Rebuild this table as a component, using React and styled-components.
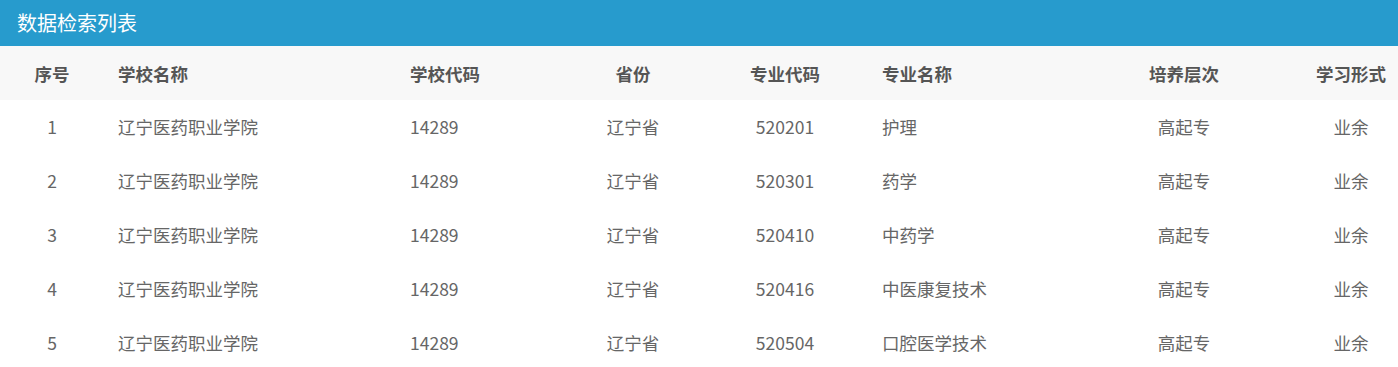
import React from 'react';
import styled, { createGlobalStyle } from 'styled-components';

const GlobalStyle = createGlobalStyle`
  body {
    margin: 0;
    background: #fff;
    font-family: "Noto Sans CJK SC", "Noto Sans", sans-serif;
  }
`;

const columns = [
  { key: 'no', title: '序号', align: 'center' },
  { key: 'school', title: '学校名称', align: 'left' },
  { key: 'code', title: '学校代码', align: 'left' },
  { key: 'province', title: '省份', align: 'center' },
  { key: 'majorCode', title: '专业代码', align: 'center' },
  { key: 'major', title: '专业名称', align: 'left' },
  { key: 'level', title: '培养层次', align: 'center' },
  { key: 'form', title: '学习形式', align: 'center' },
];

const rows = [
  { no: 1, school: '辽宁医药职业学院', code: '14289', province: '辽宁省', majorCode: '520201', major: '护理', level: '高起专', form: '业余' },
  { no: 2, school: '辽宁医药职业学院', code: '14289', province: '辽宁省', majorCode: '520301', major: '药学', level: '高起专', form: '业余' },
  { no: 3, school: '辽宁医药职业学院', code: '14289', province: '辽宁省', majorCode: '520410', major: '中药学', level: '高起专', form: '业余' },
  { no: 4, school: '辽宁医药职业学院', code: '14289', province: '辽宁省', majorCode: '520416', major: '中医康复技术', level: '高起专', form: '业余' },
  { no: 5, school: '辽宁医药职业学院', code: '14289', province: '辽宁省', majorCode: '520504', major: '口腔医学技术', level: '高起专', form: '业余' },
];

const App = () => {
  return (
    <Panel>
      <GlobalStyle />
      <PanelTitle>数据检索列表</PanelTitle>
      <Table>
        <HeadRow>
          {columns.map(c => (
            <HeadCell key={c.key} $align={c.align}>{c.title}</HeadCell>
          ))}
        </HeadRow>
        {rows.map(r => (
          <BodyRow key={r.no}>
            {columns.map(c => (
              <Cell key={c.key} $align={c.align}>{r[c.key]}</Cell>
            ))}
          </BodyRow>
        ))}
      </Table>
    </Panel>
  );
};

export default App;

//Styled components
const Panel = styled.section`
  width: 1398px;
`;

const PanelTitle = styled.h2`
  margin: 0;
  height: 46px;
  display: flex;
  align-items: center;
  padding: 0 0 2px 17px;
  box-sizing: border-box;
  background: #279bcd;
  color: #fff;
  font-size: 20px;
  font-weight: normal;
`;

const Table = styled.div`
  display: flex;
  flex-direction: column;
`;

const Row = styled.div`
  display: grid;
  grid-template-columns: 104px 292px 168px 138px 166px 196px 240px 94px;
  height: 54px;
  align-items: center;
`;

const HeadRow = styled(Row)`
  background: #f8f8f8;
`;

const BodyRow = styled(Row)`
  background: #fff;
`;

const HeadCell = styled.div`
  text-align: ${p => p.$align};
  padding-left: ${p => (p.$align === 'left' ? '14px' : '0')};
  font-size: 17.5px;
  font-weight: bold;
  color: #555;
`;

const Cell = styled.div`
  text-align: ${p => p.$align};
  padding-left: ${p => (p.$align === 'left' ? '14px' : '0')};
  padding-bottom: 1px;
  font-size: 17.5px;
  color: #666;
`;
